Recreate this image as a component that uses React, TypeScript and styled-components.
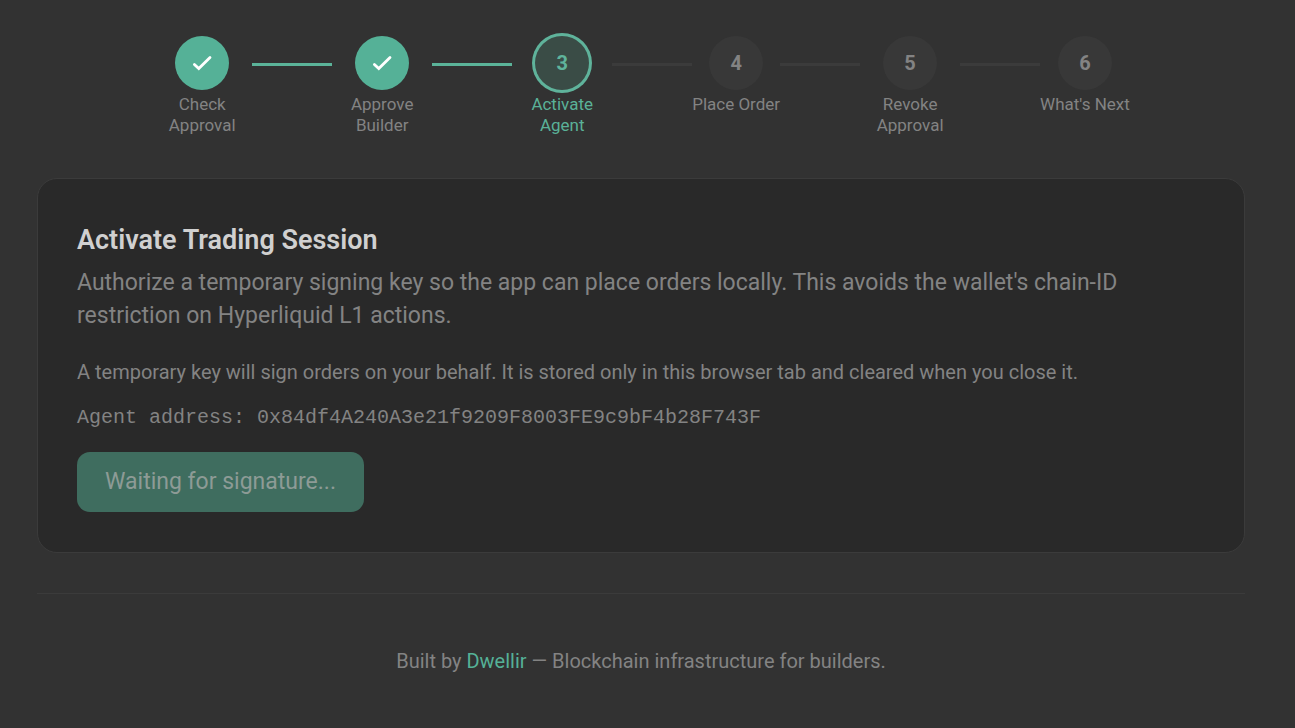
import React from "react";
import styled, { createGlobalStyle, css } from "styled-components";

const GlobalStyle = createGlobalStyle`
  *, *::before, *::after { box-sizing: border-box; }
  body {
    margin: 0;
    background: #323232;
    color: #838383;
    font-family: Roboto, "Liberation Sans", sans-serif;
    font-size: 20px;
    line-height: 28px;
  }
`;

type StepState = "done" | "active" | "pending";

const Page = styled.main`
  padding: 36px 50px 0 37px;
`;

const Stepper = styled.ol`
  display: flex;
  justify-content: center;
  align-items: flex-start;
  margin: 0;
  padding: 0;
  list-style: none;
`;

const StepItem = styled.li`
  display: flex;
  align-items: flex-start;
`;

const Step = styled.div`
  display: flex;
  flex-direction: column;
  align-items: center;
  gap: 4px;
  max-width: 100px;
`;

const circleStyles = {
  done: css`
    background: #55b197;
    color: #ffffff;
  `,
  active: css`
    background: #3a4c46;
    color: #5fb49c;
    box-shadow: 0 0 0 3px #5fb39b;
  `,
  pending: css`
    background: #383838;
    color: #838383;
  `,
};

const Circle = styled.span<{ $state: StepState }>`
  display: flex;
  align-items: center;
  justify-content: center;
  width: 54px;
  height: 54px;
  border-radius: 50%;
  font-weight: 700;
  ${({ $state }) => circleStyles[$state]}
`;

const StepLabel = styled.span<{ $active: boolean }>`
  font-size: 17px;
  line-height: 21px;
  text-align: center;
  color: ${({ $active }) => ($active ? "#5ab198" : "#838383")};
`;

const Connector = styled.span<{ $done: boolean }>`
  width: 80px;
  height: 3px;
  margin-top: 27px;
  background: ${({ $done }) => ($done ? "#5bb399" : "#3b3b3b")};
`;

const Card = styled.section`
  margin-top: 42px;
  padding: 43px 39px 40px;
  border: 1px solid #3b3b3b;
  border-radius: 20px;
  background: #292929;
`;

const Title = styled.h1`
  margin: 0;
  font-size: 27px;
  line-height: 36px;
  font-weight: 600;
  color: #d0d0d0;
`;

const Lead = styled.p`
  margin: 8px 0 0;
  font-size: 23px;
  line-height: 33px;
`;

const Note = styled.p`
  margin: 26px 0 0;
`;

const Address = styled.p`
  margin: 18px 0 0;
  font-family: "Liberation Mono", monospace;
  overflow-wrap: anywhere;
`;

const SignButton = styled.button`
  display: block;
  height: 60px;
  margin-top: 20px;
  padding: 0 28px;
  border: 0;
  border-radius: 13px;
  background: #3f6d5f;
  color: #8d9b96;
  font: inherit;
  font-size: 23px;
`;

const Footer = styled.footer`
  margin-top: 40px;
  padding: 53px 0;
  border-top: 1px solid #3b3b3b;
  text-align: center;
`;

const FooterLink = styled.a`
  color: #55b197;
  text-decoration: none;
`;

const CheckIcon = () => (
  <svg width="20" height="16" viewBox="0 0 20 16" fill="none" aria-hidden="true">
    <path
      d="M2.4 9.4L6.8 13.6L18 2.6"
      stroke="currentColor"
      strokeWidth="2.8"
      strokeLinecap="round"
    />
  </svg>
);

const steps: { label: string; state: StepState }[] = [
  { label: "Check Approval", state: "done" },
  { label: "Approve Builder", state: "done" },
  { label: "Activate Agent", state: "active" },
  { label: "Place Order", state: "pending" },
  { label: "Revoke Approval", state: "pending" },
  { label: "What's Next", state: "pending" },
];

export default function App() {
  return (
    <>
      <GlobalStyle />
      <Page>
        <Stepper>
          {steps.map(({ label, state }, index) => (
            <StepItem key={label} aria-current={state === "active" ? "step" : undefined}>
              <Step>
                <Circle $state={state}>{state === "done" ? <CheckIcon /> : index + 1}</Circle>
                <StepLabel $active={state === "active"}>{label}</StepLabel>
              </Step>
              {index < steps.length - 1 && <Connector $done={state === "done"} />}
            </StepItem>
          ))}
        </Stepper>
        <Card>
          <Title>Activate Trading Session</Title>
          <Lead>
            Authorize a temporary signing key so the app can place orders locally. This avoids the
            wallet's chain-ID restriction on Hyperliquid L1 actions.
          </Lead>
          <Note>
            A temporary key will sign orders on your behalf. It is stored only in this browser tab
            and cleared when you close it.
          </Note>
          <Address>Agent address: 0x84df4A240A3e21f9209F8003FE9c9bF4b28F743F</Address>
          <SignButton type="button" disabled>
            Waiting for signature...
          </SignButton>
        </Card>
        <Footer>
          Built by <FooterLink href="https://www.dwellir.com">Dwellir</FooterLink> — Blockchain
          infrastructure for builders.
        </Footer>
      </Page>
    </>
  );
}
